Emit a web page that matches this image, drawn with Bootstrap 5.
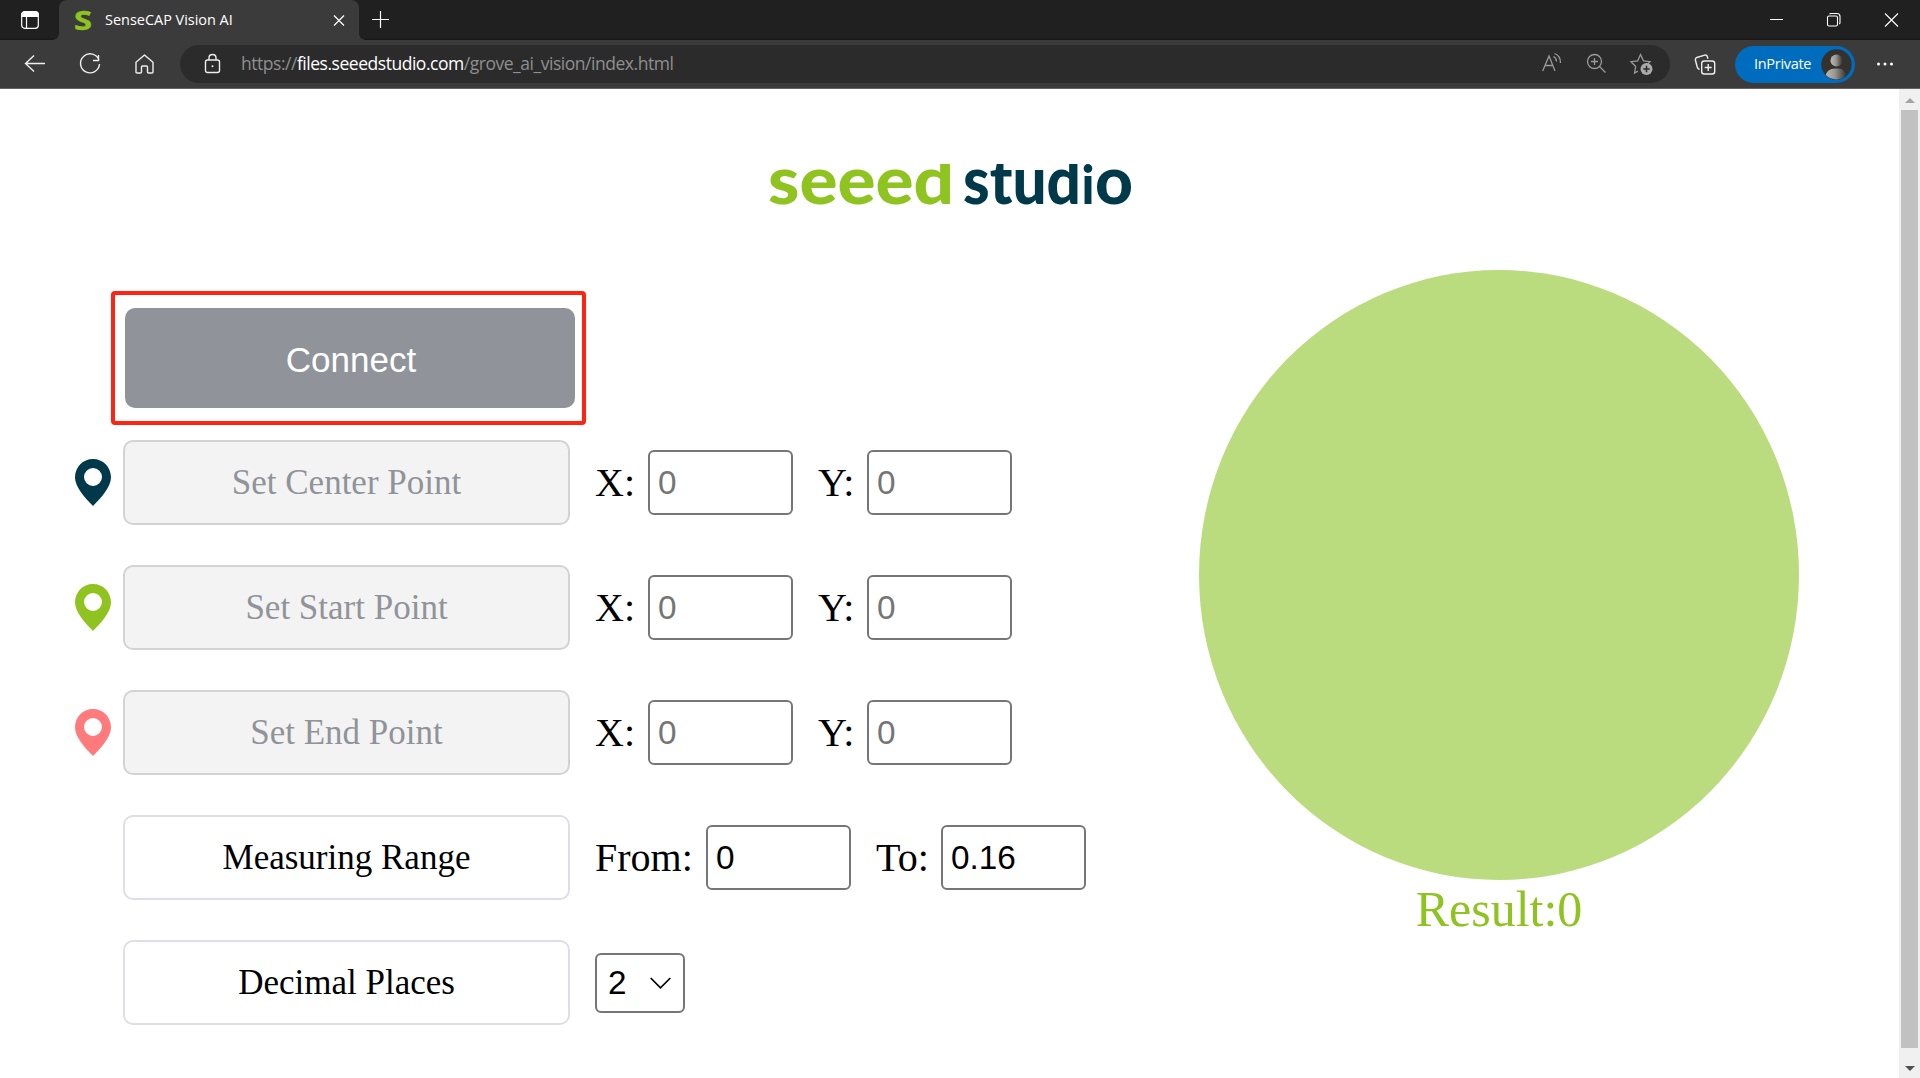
<!DOCTYPE html>
<html lang="en">
<head>
<meta charset="utf-8">
<title>SenseCAP Vision AI</title>
<link href="https://cdn.jsdelivr.net/npm/bootstrap@5.3.0/dist/css/bootstrap.min.css" rel="stylesheet">
<style>
body{height:1078px;overflow:hidden;background:#fff;color:#000;font-family:"Liberation Serif",serif}
svg{display:block;flex:none;overflow:visible}
.ui{font-family:"Open Sans","Noto Sans",sans-serif;color:#fff}
.tabstrip{height:40px;background:#202020;box-shadow:inset 0 -2px 2px -1px #161616}
.tab-btn{width:59px;padding-left:21px}
.tab-on{width:300px;background:#3b3b3b;border-radius:8px 8px 0 0;padding:0 15px 0 16px;position:relative}
.tab-on::before,.tab-on::after{content:"";position:absolute;bottom:0;width:6px;height:6px}
.tab-on::before{left:-6px;background:radial-gradient(circle at 0 0,#202020 5.5px,#3b3b3b 6px)}
.tab-on::after{right:-6px;background:radial-gradient(circle at 100% 0,#202020 5.5px,#3b3b3b 6px)}
.fav{width:30px}
.tab-title{font-size:14.5px;letter-spacing:-.03px;white-space:nowrap}
.new-tab{padding-left:13px}
.win-ctl{padding-right:21px}
.toolbar{height:49px;background:#3b3b3b;border-bottom:1px solid #636363;padding:0 27px 0 25px}
.nav-ico{width:154px;gap:34px}
.address{width:1490px;height:38px;margin-left:1px;border-radius:19px;background:#2b2b2b;padding:0 17px 0 24px}
.url{font-size:17.5px;letter-spacing:-.47px;color:#8f8f8f;margin-left:20px;padding-bottom:1px;white-space:nowrap}
.url b{font-weight:400;color:#fff}
.collect{margin-left:25px}
.profile{width:120px;height:37px;border-radius:19px;background:#006cbe;margin-left:19px;padding:0 3px 0 19px;font-size:14.5px;letter-spacing:-.3px}
.viewport{height:989px}
.brandbar{height:181px;padding-top:67px}
.left{width:1199px;padding:21px 0 0 75px}
.callout-box{width:475px;height:134px;margin-left:35.5px;border:4px solid #ff2312;border-radius:4px;padding:13px 6.5px 13px 10.5px}
.btn-connect{width:450px;height:100px;border:0;border-radius:10px;background:#909399;color:#fff;font:35px "Liberation Sans",sans-serif;padding:4px 0 0 2px}
.rows{gap:40px;margin-top:15px}
.line{height:85px}
.pinbox{width:48px}
.act{width:447px;height:85px;border:2px solid #dcdfe6;border-radius:10px;background:#fff;color:#000;font:35px "Liberation Serif",serif;padding:0}
.act:disabled{background:#f3f3f3;border-color:#d3d3d3;color:#909399;opacity:1}
.lab,.pick{margin-left:25px}
.lab{font-size:40px;line-height:1;white-space:nowrap}
.lab.x{width:53px}.lab.y{width:49px}.lab.f{width:111px}.lab.t{width:65px}
.num,.sel{border:2px solid #767676;border-radius:6px;background:#fff;color:#000;font:33.33px "Liberation Sans",sans-serif;outline:0}
.num{width:145px;height:65px;padding:0 8px}
.num::placeholder{color:#757575;opacity:1}
.sel{width:90px;height:60px;padding:0 0 0 11px;appearance:none}
.sel-arrow{position:absolute;right:14px;top:24px}
.right{width:600px}
.dial{width:600px;height:610px;border-radius:50%;background:#bbdb7f}
.result{font-size:50px;line-height:58px;color:#8fc31f}
.scroll{width:21px;background:#f0f0f0;padding:9px 2px 7px}
.thumb{background:#c1c1c1;width:17px;height:938px;margin-top:7px}
</style>
</head>
<body>
<header class="ui">
  <div class="tabstrip d-flex">
    <div class="tab-btn d-flex align-items-center">
      <svg width="18" height="18" viewBox="0 0 18 18" fill="none" stroke="#fff" stroke-width="1.2"><rect x=".7" y=".7" width="16.6" height="16.6" rx="3"/><path d="M1 2.5Q1 1 3 1h12q2 0 2 1.500V5.500H1z" fill="#fff"/><path d="M5.500 5v12"/></svg>
    </div>
    <div class="tab-on d-flex align-items-center">
      <svg class="fav" width="30" height="40"><text x="-1" y="29.500" font-family="Open Sans" font-weight="700" font-size="26" fill="#8fc31f" stroke="#8fc31f" stroke-width=".5" textLength="18" lengthAdjust="spacingAndGlyphs">S</text></svg>
      <span class="tab-title">SenseCAP Vision AI</span>
      <svg class="ms-auto" width="10" height="10" viewBox="0 0 10 10" stroke="#fff" stroke-width="1.2"><path d="M0 .5l10 10M10 .5L0 10.500"/></svg>
    </div>
    <div class="new-tab d-flex align-items-center">
      <svg width="18" height="18" viewBox="0 0 18 18" stroke="#fff" stroke-width="1.2"><path d="M8.500 0v17M0 8.500h17"/></svg>
    </div>
    <div class="win-ctl d-flex align-items-center ms-auto">
      <svg width="129" height="14" viewBox="0 0 129 14" fill="none" stroke="#fff" stroke-width="1.100"><path d="M0 6.500h13M115 .5l13 13M128 .5l-13 13"/><rect x="57.500" y="3" width="10" height="10" rx="1.500"/><path d="M59.500 1q.5-.5 1.500-.5h6q3 0 3 3v6q0 1-.7 1.500"/></svg>
    </div>
  </div>
  <div class="toolbar d-flex align-items-center">
    <div class="nav-ico d-flex align-items-center">
      <svg width="21" height="18" viewBox="0 0 21 18" fill="none" stroke="#eee" stroke-width="1.400"><path d="M20 8.500H.500M9 .5l-8.500 8 8.500 8"/></svg>
      <svg width="21" height="21" viewBox="0 0 21 21" fill="none" stroke="#eee" stroke-width="1.400"><path d="M19 6.200A9.500 9.500 0 1 0 19.500 10M18.500 1v5.500H13"/></svg>
      <svg width="19" height="20" viewBox="0 0 19 20" fill="none" stroke="#eee" stroke-width="1.400" stroke-linejoin="round"><path d="M1 8.200L9.500 1 18 8.200V18q0 1-1 1h-3.500q-1 0-1-1v-5q0-1-1-1h-4q-1 0-1 1v5q0 1-1 1H2q-1 0-1-1z"/></svg>
    </div>
    <div class="address d-flex align-items-center">
      <svg width="17" height="20" viewBox="0 0 17 20" fill="none" stroke="#eee" stroke-width="1.400"><rect x="1.500" y="6" width="14" height="12.500" rx="2"/><path d="M5 6V4q0-3.500 3.500-3.500T12 4v2"/><circle cx="8.500" cy="12.300" r="1" fill="#eee" stroke="none"/></svg>
      <span class="url">https://<b>files.seeedstudio.com</b>/grove_ai_vision/index.html</span>
      <svg class="ms-auto" width="111" height="22" viewBox="0 0 111 22" fill="none" stroke="#9a9a9a" stroke-width="1.300"><path d="M.7 18L7 3l6 15M3 12.500h8M11.500 3.500q3 1.500 3 5M12.500.5q6 2 6 9.500"/><circle cx="52.500" cy="8.500" r="7"/><path d="M57.500 13.500l6 6M49 8.500h7M52.500 5v7"/><path d="M96 18.200l-3.500 1.800 1.200-6.500-4.700-4.800 6.600-.8L98.500 1.500l3 6.300 6.500.9-2.500 2.300"/><circle cx="104.500" cy="16" r="6" fill="#aaa" stroke="none"/><path d="M104.500 12.800v6.400M101.300 16h6.400" stroke="#2b2b2b" stroke-width="1.500"/></svg>
    </div>
    <svg class="collect" width="21" height="21" viewBox="0 0 21 21" fill="none" stroke="#eee" stroke-width="1.400"><rect x="6.700" y="7" width="13" height="13" rx="2.500"/><path d="M13.200 10v7M9.700 13.500h7M4.500 15.500Q2.700 14.800 2.200 13L.4 6Q.1 4 1.800 3.500l8-2.400q2-.4 2.500 1.400l.6 2.200"/></svg>
    <div class="profile d-flex align-items-center justify-content-between"><span>InPrivate</span>
      <svg width="31" height="31" viewBox="0 0 31 31"><defs><linearGradient id="pg"><stop offset="0" stop-color="#bdb9b5"/><stop offset=".45" stop-color="#99958f"/><stop offset="1" stop-color="#34322f"/></linearGradient><clipPath id="pc"><circle cx="15.500" cy="15.500" r="15"/></clipPath></defs><circle cx="15.500" cy="15.500" r="15.200" fill="#34322f"/><g clip-path="url(#pc)" fill="url(#pg)"><circle cx="15.500" cy="11.500" r="6"/><path d="M4.500 29q0-9.500 10-9.500h2q9 0 9 9.500v2h-21z"/></g></svg>
    </div>
    <svg class="ms-auto" width="16" height="4" viewBox="0 0 16 4" fill="#fff"><circle cx="1.500" cy="2" r="1.500"/><circle cx="8" cy="2" r="1.500"/><circle cx="14.500" cy="2" r="1.500"/></svg>
  </div>
</header>

<div class="viewport d-flex">
  <main class="flex-grow-1">
    <div class="brandbar d-flex justify-content-center">
      <!-- wordmark with shortened ascenders -->
      <svg width="362" height="50" viewBox="0 0 362 50" font-family="Lato" font-weight="900" font-size="66"><defs><clipPath id="asc"><rect x="-5" y="8" width="375" height="45"/></clipPath></defs><g clip-path="url(#asc)"><text x="-1" y="48" fill="#8fc31f" textLength="186" lengthAdjust="spacingAndGlyphs">seeed</text><text y="48" fill="#003a4a"><tspan x="194" textLength="118" lengthAdjust="spacingAndGlyphs">stud</tspan><tspan x="312.500" font-size="54" textLength="13" lengthAdjust="spacingAndGlyphs">i</tspan><tspan x="326" textLength="38" lengthAdjust="spacingAndGlyphs">o</tspan></text></g></svg>
    </div>
    <div class="d-flex">
      <section class="left">
        <div class="callout-box"><button class="btn-connect" type="button">Connect</button></div>
        <div class="rows d-flex flex-column">
          <div class="line d-flex align-items-center">
            <div class="pinbox"><svg width="36" height="47" viewBox="0 0 36 47" fill="#003a4a"><path fill-rule="evenodd" d="M18 0C28 0 36 8 36 18.500 36 28 26 39 18 47 10 39 0 28 0 18.500 0 8 8 0 18 0zM18 9a9 9 0 1 0 0 18 9 9 0 0 0 0-18z"/></svg></div>
            <button class="act" disabled>Set Center Point</button>
            <label class="lab x">X:</label><input class="num" placeholder="0">
            <label class="lab y">Y:</label><input class="num" placeholder="0">
          </div>
          <div class="line d-flex align-items-center">
            <div class="pinbox"><svg width="36" height="47" viewBox="0 0 36 47" fill="#8fc31f"><path fill-rule="evenodd" d="M18 0C28 0 36 8 36 18.500 36 28 26 39 18 47 10 39 0 28 0 18.500 0 8 8 0 18 0zM18 9a9 9 0 1 0 0 18 9 9 0 0 0 0-18z"/></svg></div>
            <button class="act" disabled>Set Start Point</button>
            <label class="lab x">X:</label><input class="num" placeholder="0">
            <label class="lab y">Y:</label><input class="num" placeholder="0">
          </div>
          <div class="line d-flex align-items-center">
            <div class="pinbox"><svg width="36" height="47" viewBox="0 0 36 47" fill="#ff7b7b"><path fill-rule="evenodd" d="M18 0C28 0 36 8 36 18.500 36 28 26 39 18 47 10 39 0 28 0 18.500 0 8 8 0 18 0zM18 9a9 9 0 1 0 0 18 9 9 0 0 0 0-18z"/></svg></div>
            <button class="act" disabled>Set End Point</button>
            <label class="lab x">X:</label><input class="num" placeholder="0">
            <label class="lab y">Y:</label><input class="num" placeholder="0">
          </div>
          <div class="line d-flex align-items-center">
            <div class="pinbox"></div>
            <button class="act">Measuring Range</button>
            <label class="lab f">From:</label><input class="num" value="0">
            <label class="lab t">To:</label><input class="num" value="0.16">
          </div>
          <div class="line d-flex align-items-center">
            <div class="pinbox"></div>
            <button class="act">Decimal Places</button>
            <div class="pick position-relative"><select class="sel"><option>2</option></select>
              <svg class="sel-arrow" width="21" height="12" viewBox="0 0 21 12" fill="none" stroke="#000" stroke-width="1.700"><path d="M.7 1l9.800 9.800L20.300 1"/></svg></div>
          </div>
        </div>
      </section>
      <section class="right text-center">
        <div class="dial"></div>
        <div class="result">Result:0</div>
      </section>
    </div>
  </main>
  <aside class="scroll d-flex flex-column align-items-center">
    <svg width="10" height="5" viewBox="0 0 10 5" fill="#a3a3a3"><path d="M0 5l5-5 5 5z"/></svg>
    <div class="thumb"></div>
    <svg class="mt-auto" width="10" height="5" viewBox="0 0 10 5" fill="#505050"><path d="M0 0h10L5 5z"/></svg>
  </aside>
</div>
<script src="https://cdn.jsdelivr.net/npm/bootstrap@5.3.0/dist/js/bootstrap.bundle.min.js"></script>
</body>
</html>
